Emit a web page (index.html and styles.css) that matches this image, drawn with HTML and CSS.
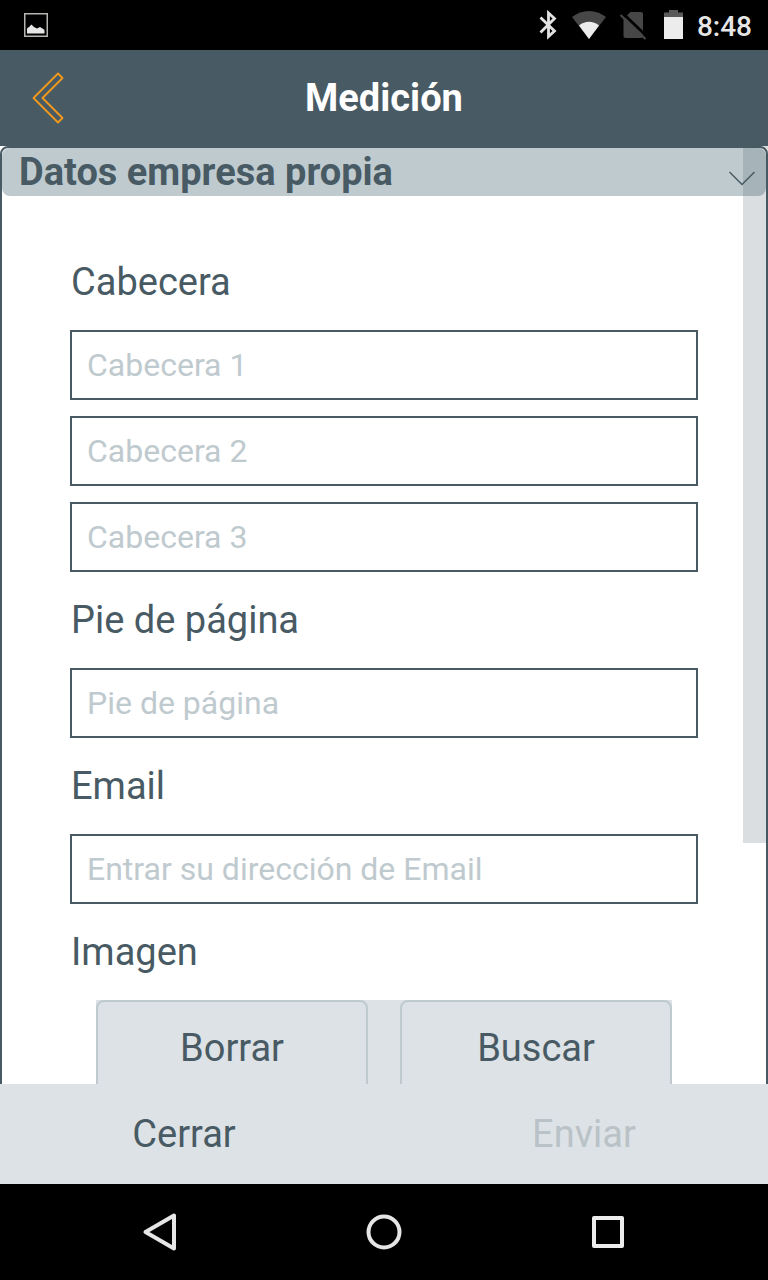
FILE: index.html
```html
<!DOCTYPE html>
<html lang="es">
<head>
  <meta charset="UTF-8" />
  <meta name="viewport" content="width=device-width, initial-scale=1.0"/>
  <title>Medición</title>
  <link rel="stylesheet" href="styles.css">
</head>
<body>

  <div class="status-bar">
    <svg width="24" height="24" viewBox="0 0 24 24">
      <rect x="0.75" y="0.75" width="22.5" height="22.5" fill="none" stroke="#b4b4b0" stroke-width="1.5"/>
      <path d="M3 20.500v-5l2-1.500 2.500-2.500 2.500 2.500 3 1.500 3-1.500 2.500 1.500 2 1.500v3.500z" fill="#e6e6e6"/>
    </svg>
    <div class="status-icons">
      <svg width="20" height="30" viewBox="0 0 20 30">
        <path d="M2.500 7.500l14 13.500-6 5.500V3l6 5.500L2.500 22.500" fill="none" stroke="#e2e2e2" stroke-width="2.800"/>
      </svg>
      <svg width="34" height="30" viewBox="0 0 34 30">
        <path d="M0 7C10-1 24-1 34 7L17 29z" fill="#474747"/>
        <path d="M7 15.500c6-5 14-5 20 0L17 29z" fill="#ececec"/>
      </svg>
      <svg width="30" height="30" viewBox="0 0 30 30">
        <path d="M10.500 2H21q2 0 2 2v22q0 2-2 2H5.500q-2 0-2-2V9z" fill="#474747"/>
        <path d="M2.500 3l25 24" stroke="#000" stroke-width="2.800"/>
        <path d="M0.500 5l25 24" stroke="#474747" stroke-width="2.200"/>
      </svg>
      <svg width="19" height="30" viewBox="0 0 19 30">
        <path d="M0 2.500h5V0h9v2.500h5V8H0z" fill="#5a5a5a"/>
        <path d="M0 7h19v22H0z" fill="#ececec"/>
      </svg>
      <span class="clock">8:48</span>
    </div>
  </div>

  <header class="header">
    <button class="back-btn" aria-label="Volver">
      <svg width="32" height="52" viewBox="0 0 32 52">
        <path d="M26 1.500l4.500 4.500L10.500 26l20 20L26 50.500L1.500 26z" fill="none" stroke="#f39a1b" stroke-width="1.800" stroke-linejoin="round"/>
      </svg>
    </button>
    <h1>Medición</h1>
  </header>

  <main class="content">
    <form class="panel" id="datosForm">
      <h2 class="panel-title">
        Datos empresa propia
        <svg width="26" height="16" viewBox="0 0 26 16">
          <path d="M0.500 1L13 13.500L25.500 1" fill="none" stroke="#485a63" stroke-width="1.500"/>
        </svg>
      </h2>

      <div class="fields">
        <label for="cabecera1">Cabecera</label>
        <div class="input-group">
          <input type="text" id="cabecera1" placeholder="Cabecera 1">
          <input type="text" id="cabecera2" placeholder="Cabecera 2" aria-label="Cabecera 2">
          <input type="text" id="cabecera3" placeholder="Cabecera 3" aria-label="Cabecera 3">
        </div>

        <label for="pie">Pie de página</label>
        <input type="text" id="pie" placeholder="Pie de página">

        <label for="email">Email</label>
        <input type="email" id="email" placeholder="Entrar su dirección de Email">

        <div class="label">Imagen</div>
        <div class="image-buttons">
          <button type="button">Borrar</button>
          <button type="button">Buscar</button>
        </div>
      </div>
    </form>
    <div class="scroll-thumb"></div>
  </main>

  <footer class="footer">
    <button type="button">Cerrar</button>
    <button type="submit" form="datosForm" disabled>Enviar</button>
  </footer>

  <nav class="nav-bar">
    <button aria-label="Atrás">
      <svg width="40" height="40" viewBox="0 0 40 40">
        <path d="M5.500 20L34 3.500v33z" fill="none" stroke="#e6e6e6" stroke-width="4" stroke-linejoin="round"/>
      </svg>
    </button>
    <button aria-label="Inicio">
      <svg width="40" height="40" viewBox="0 0 40 40">
        <circle cx="20" cy="20" r="15.500" fill="none" stroke="#e6e6e6" stroke-width="4"/>
      </svg>
    </button>
    <button aria-label="Recientes">
      <svg width="40" height="40" viewBox="0 0 40 40">
        <rect x="6" y="6" width="28" height="28" fill="none" stroke="#ececec" stroke-width="4" stroke-linejoin="round"/>
      </svg>
    </button>
  </nav>

</body>
</html>
```
FILE: styles.css
```css
* {
  box-sizing: border-box;
}

body {
  font-family: Roboto, sans-serif;
  font-size: 38px;
  color: #485a63;
  background-color: #fff;
  display: flex;
  flex-direction: column;
  height: 100vh;
  margin: 0;
}

svg {
  display: block;
}

button {
  font: inherit;
  color: inherit;
  background: none;
  border: none;
  padding: 0;
  cursor: pointer;
}

.status-bar {
  display: flex;
  flex-shrink: 0;
  justify-content: space-between;
  align-items: center;
  height: 50px;
  padding: 0 16px 0 24px;
  background-color: #000;
}

.status-icons {
  display: flex;
  align-items: center;
  gap: 14px;
}

.clock {
  padding-top: 4px;
  font-size: 28px;
  font-weight: 500;
  line-height: 30px;
  color: #e6e6e6;
}

.header {
  display: grid;
  grid-template-columns: 96px 1fr 96px;
  flex-shrink: 0;
  align-items: center;
  height: 96px;
  background-color: #485a63;
}

.header h1 {
  margin: 0;
  font-size: 38px;
  color: #fff;
  text-align: center;
}

.back-btn {
  display: flex;
  justify-content: center;
}

.content {
  position: relative;
  flex: 1;
  min-height: 0;
  overflow: hidden;
}

.panel {
  border: 2px solid #485a63;
  border-radius: 8px;
}

.panel-title {
  display: flex;
  justify-content: space-between;
  align-items: center;
  margin: 0;
  padding: 0 11px 0 17px;
  font-size: 38px;
  line-height: 48px;
  background-color: #bfcacf;
  border-radius: 8px;
}

.panel-title svg {
  margin-top: 14px;
}

.fields {
  padding: 38px 68px;
}

.fields label,
.fields .label {
  display: block;
  padding-left: 1px;
  line-height: 96px;
}

.fields input {
  display: block;
  width: 100%;
  height: 70px;
  padding: 0 15px;
  font-family: inherit;
  font-size: 32px;
  color: #485a63;
  background-color: #fff;
  border: 2px solid #485a63;
  border-radius: 0;
}

.fields input::placeholder {
  color: #bfcacf;
}

.input-group {
  display: flex;
  flex-direction: column;
  gap: 16px;
}

.image-buttons {
  display: flex;
  gap: 32px;
  margin: 0 26px;
  background-color: #dde2e6;
}

.image-buttons button {
  flex: 1;
  height: 96px;
  border: 2px solid #bfcacf;
  border-radius: 8px;
}

.scroll-thumb {
  position: absolute;
  top: 0;
  right: 0;
  width: 25px;
  height: 697px;
  background-color: rgba(72, 90, 99, 0.2);
}

.footer {
  display: flex;
  flex-shrink: 0;
  gap: 32px;
  height: 100px;
  background-color: #dde2e6;
}

.footer button {
  flex: 1;
}

.footer button:disabled {
  color: #b9c2c6;
}

.nav-bar {
  display: flex;
  flex-shrink: 0;
  height: 96px;
  padding: 0 48px;
  background-color: #000;
}

.nav-bar button {
  display: flex;
  flex: 1;
  justify-content: center;
  align-items: center;
}
```
